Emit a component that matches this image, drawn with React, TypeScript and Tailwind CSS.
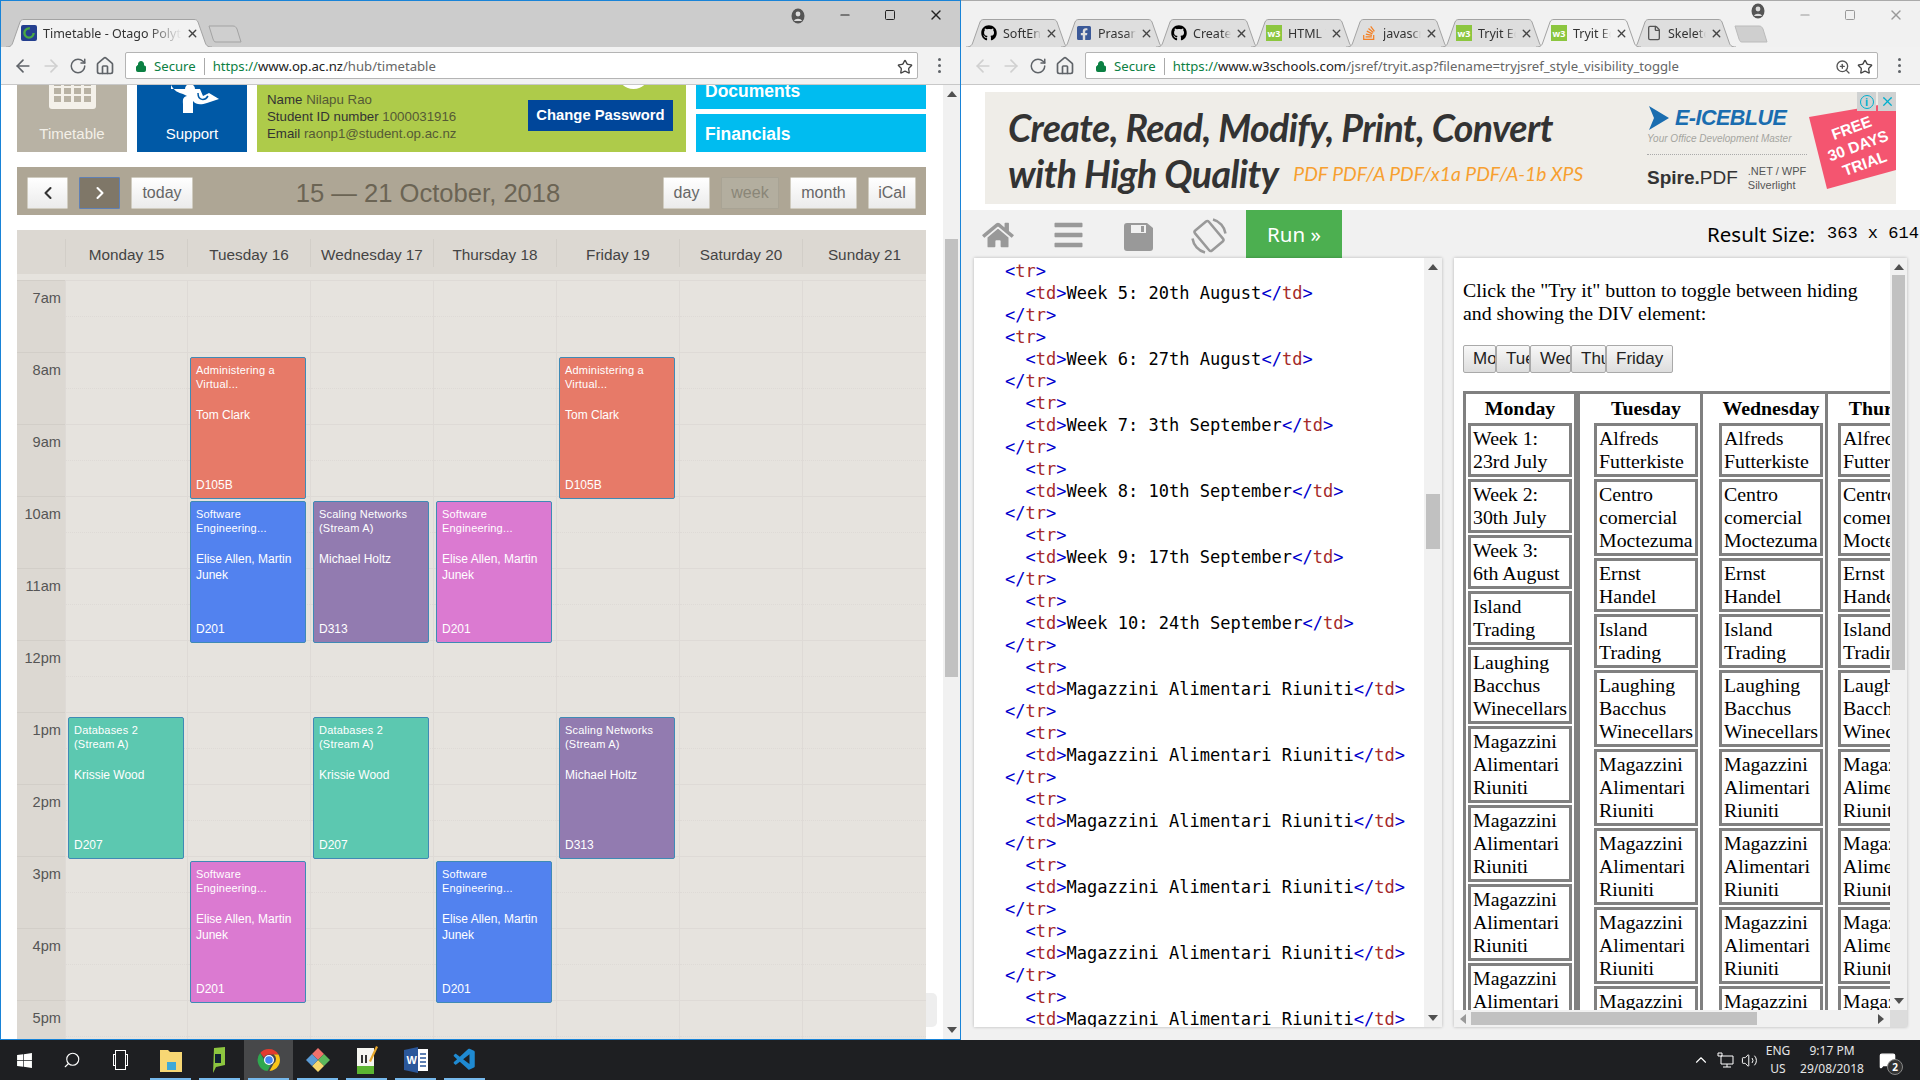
import React from 'react'
import { ArrowLeft, ArrowRight, RotateCw, Home, Star, Lock, X, Minus, Square, ZoomIn, File, ChevronLeft, ChevronRight, ChevronUp, Search, Volume2, MessageSquare } from 'lucide-react'
import { FaGithub, FaFacebookSquare, FaStackOverflow, FaWindows, FaHome, FaBars } from 'react-icons/fa'
import { VscVscode } from 'react-icons/vsc'

const sans = "font-['Liberation_Sans',Arial,sans-serif]"
const ui = "font-['Noto_Sans',sans-serif]"

function TabShape({ w, fill, stroke }: { w: number; fill: string; stroke: string }) {
  const d = `M0 28 C5 28 6 26 7 23 L14 3 C15 1 16 0.5 18 0.5 L${w - 18} 0.5 C${w - 16} 0.5 ${w - 15} 1 ${w - 14} 3 L${w - 7} 23 C${w - 6} 26 ${w - 5} 28 ${w} 28`
  return (
    <svg className="absolute inset-0" width={w} height={28} viewBox={`0 0 ${w} 28`}>
      <path d={d} fill={fill} stroke={stroke} />
    </svg>
  )
}

function W3Icon() {
  return <div className="w-4 h-4 bg-[#8cc63f] text-white text-[9px] font-bold flex items-center justify-center leading-none">w3</div>
}

function OtagoIcon() {
  return (
    <svg width="16" height="16" viewBox="0 0 16 16">
      <rect width="16" height="16" rx="2" fill="#243f8f" />
      <circle cx="8" cy="8" r="4.6" fill="none" stroke="#49a942" strokeWidth="2.4" strokeDasharray="22 8" />
    </svg>
  )
}

function Tab({ w, active, icon, title, bar }: { w: number; active?: boolean; icon: React.ReactNode; title: string; bar: string }) {
  return (
    <div className={`relative h-[28px] shrink-0 ${active ? 'z-10' : ''}`} style={{ width: w }}>
      <TabShape w={w} fill={active ? '#f2f2f2' : bar} stroke="#a3a3a3" />
      <div className="relative h-full flex items-center pl-[15px] pr-[13px]">
        <div className="w-4 h-4 shrink-0 flex items-center justify-center">{icon}</div>
        <div className={`${ui} ml-[6px] pt-[3px] flex-1 overflow-hidden whitespace-nowrap text-[12.5px] text-[#333] [mask-image:linear-gradient(to_right,black_75%,transparent)]`}>{title}</div>
        <X className="w-[13px] h-[13px] shrink-0 ml-[4px] text-[#444]" strokeWidth={2.5} />
      </div>
    </div>
  )
}

function Omnibox({ host, path, zoom, faded }: { host: string; path: string; zoom?: boolean; faded?: boolean }) {
  return (
    <div className="h-[38px] bg-[#f2f2f2] border-b border-[#c8c8c8] flex items-center shrink-0 text-[#5f6368]">
      <div className="w-[124px] flex items-center pl-[12px] gap-[8px] shrink-0">
        <ArrowLeft className={`w-5 h-5 ${faded ? 'text-[#d0d0d0]' : ''}`} />
        <ArrowRight className="w-5 h-5 text-[#d0d0d0]" />
        <RotateCw className="w-[18px] h-[18px]" />
        <Home className="w-5 h-5" />
      </div>
      <div className={`${ui} w-[793px] h-[27px] bg-white border border-[#b4b4b4] rounded-[2px] flex items-center pl-[9px] pr-[4px] pt-[2px] text-[13.15px] whitespace-nowrap`}>
        <Lock className="w-[12px] h-[13px] text-[#0b8043] shrink-0" fill="#0b8043" />
        <span className="text-[#0b8043] ml-[7px]">Secure</span>
        <span className="w-px h-[17px] bg-[#aaa] mx-[8px]" />
        <span className="text-[#0b8043]">https://</span>
        <span className="text-[#222]">{host}</span>
        <span className="text-[#666]">{path}</span>
        <span className="flex-1" />
        {zoom && <ZoomIn className="w-[16px] h-[16px] mr-[6px] text-[#555]" />}
        <Star className="w-[16px] h-[16px] text-[#444]" />
      </div>
      <div className="flex-1 flex flex-col items-center gap-[3px]">
        <span className="w-[3px] h-[3px] bg-[#5f6368] rounded-full" />
        <span className="w-[3px] h-[3px] bg-[#5f6368] rounded-full" />
        <span className="w-[3px] h-[3px] bg-[#5f6368] rounded-full" />
      </div>
    </div>
  )
}

function WindowControls({ light, userTop }: { light?: boolean; userTop: string }) {
  const c = light ? 'text-[#999]' : 'text-[#222]'
  return (
    <div className={`absolute right-0 top-0 flex items-center h-[28px] ${c}`}>
      <svg className={`mr-[33px] ${userTop} text-[#555]`} width="14" height="16" viewBox="0 0 14 16">
        <ellipse cx="7" cy="8" rx="6.5" ry="7.5" fill="currentColor" />
        <circle cx="7" cy="6" r="2.4" fill="#ddd" />
        <path d="M3 13c1-3 7-3 8 0z" fill="#ddd" />
      </svg>
      <Minus className="w-[14px] h-[14px] mr-[32px]" />
      <Square className="w-[12px] h-[14px] mr-[32px]" />
      <X className="w-[16px] h-[16px] mr-[16px]" />
    </div>
  )
}

function CalendarGlyph() {
  return (
    <svg className="absolute left-[32px] bottom-[43px]" width="47" height="30" viewBox="0 0 47 30">
      <path d="M0 0h47v27a3 3 0 0 1-3 3H3a3 3 0 0 1-3-3z" fill="#f4f1ea" />
      <g fill="#b8b2a4">
        {[5, 15, 25, 35].map((x) =>
          [1, 9, 17].map((y) => <rect key={`${x}-${y}`} x={x} y={y} width="7" height="6" />)
        )}
      </g>
    </svg>
  )
}

function SupportGlyph() {
  return (
    <svg className="absolute left-[33px] top-0" width="50" height="28" viewBox="0 0 50 28">
      <path d="M1 0c3 6 8 8 12 9l4 2c-5 1-4 5-4 8v9h10v-12c3 4 8 4 14 2l12-4-10-6-6 3-3-7H1z" fill="#fff" />
      <circle cx="20" cy="4" r="5" fill="#fff" />
      <path d="M28 8c0 8 7 8 10 3" fill="none" stroke="#0059a6" strokeWidth="1.5" />
    </svg>
  )
}

function CalButton({ w, children, tone }: { w: number; children: React.ReactNode; tone?: 'active' | 'off' }) {
  const cls =
    tone === 'active'
      ? 'bg-[#7f7768] border-[#5f80b5] text-white'
      : tone === 'off'
        ? 'bg-[#b3ae9f] border-[#a8a394] text-[#8a8678]'
        : 'bg-gradient-to-b from-white to-[#ebebeb] border-[#d0ccc0] text-[#666]'
  return (
    <div className={`h-[32px] shrink-0 border rounded-[1px] flex items-center justify-center text-[16px] ${cls}`} style={{ width: w }}>
      {children}
    </div>
  )
}

type Ev = { day: number; hour: number; color: string; title: string[]; who: string[]; room: string }

const SE = ['Software', 'Engineering...']
const AV = ['Administering a', 'Virtual...']
const SN = ['Scaling Networks', '(Stream A)']
const DB = ['Databases 2', '(Stream A)']
const EA = ['Elise Allen, Martin', 'Junek']

const events: Ev[] = [
  { day: 1, hour: 8, color: 'bg-[#e77a68]', title: AV, who: ['Tom Clark'], room: 'D105B' },
  { day: 4, hour: 8, color: 'bg-[#e77a68]', title: AV, who: ['Tom Clark'], room: 'D105B' },
  { day: 1, hour: 10, color: 'bg-[#5282ef]', title: SE, who: EA, room: 'D201' },
  { day: 2, hour: 10, color: 'bg-[#927bb0]', title: SN, who: ['Michael Holtz'], room: 'D313' },
  { day: 3, hour: 10, color: 'bg-[#db7ad1]', title: SE, who: EA, room: 'D201' },
  { day: 0, hour: 13, color: 'bg-[#5cc8b0]', title: DB, who: ['Krissie Wood'], room: 'D207' },
  { day: 2, hour: 13, color: 'bg-[#5cc8b0]', title: DB, who: ['Krissie Wood'], room: 'D207' },
  { day: 4, hour: 13, color: 'bg-[#927bb0]', title: SN, who: ['Michael Holtz'], room: 'D313' },
  { day: 1, hour: 15, color: 'bg-[#db7ad1]', title: SE, who: EA, room: 'D201' },
  { day: 3, hour: 15, color: 'bg-[#5282ef]', title: SE, who: EA, room: 'D201' },
]

const days = ['Monday 15', 'Tuesday 16', 'Wednesday 17', 'Thursday 18', 'Friday 19', 'Saturday 20', 'Sunday 21']
const hours = ['7am', '8am', '9am', '10am', '11am', '12pm', '1pm', '2pm', '3pm', '4pm', '5pm']

function EventCard({ ev }: { ev: Ev }) {
  return (
    <div
      className={`absolute left-[2px] w-[116px] h-[142px] ${ev.color} border border-[#3f8ab5] rounded-[2px] flex flex-col pl-[5px] pt-[5px] pb-[5px] text-white`}
      style={{ top: (ev.hour - 7) * 72 + 5 }}
    >
      <div className="text-[11px] leading-[14px] tracking-[0.2px]">
        {ev.title.map((t) => (
          <div key={t}>{t}</div>
        ))}
      </div>
      <div className="mt-[16px] text-[12px] leading-[16px]">
        {ev.who.map((t) => (
          <div key={t}>{t}</div>
        ))}
      </div>
      <div className="mt-auto text-[12px] leading-[16px]">{ev.room}</div>
    </div>
  )
}

function HourLines() {
  return (
    <>
      {hours.map((h) => (
        <div key={h} className="h-[72px] border-t border-[#dedad6]">
          <div className="h-[36px] border-b border-dotted border-[#dedad6]" />
        </div>
      ))}
    </>
  )
}

function Timetable() {
  return (
    <div className={`${sans} flex-1 relative overflow-hidden pl-4 bg-white`}>
      <div className="w-[909px]">
        {/* Tiles */}
        <div className="flex gap-[10px] h-[67px]">
          <div className="relative w-[110px] bg-[#b8b2a4] flex items-end justify-center pb-[7px] text-[15px] text-[#f3f0e8]">
            <CalendarGlyph />
            Timetable
          </div>
          <div className="relative w-[110px] bg-[#0059a6] flex items-end justify-center pb-[7px] text-[15px] text-white">
            <SupportGlyph />
            Support
          </div>
          <div className="relative w-[429px] bg-[#aecb4a] overflow-hidden flex items-end justify-between pl-[10px] pr-[13px] pb-[10px] text-[13.3px] leading-[17px] text-[#555a35]">
            <div className="absolute left-[360px] -top-[29px] w-[33px] h-[33px] rounded-full bg-white" />
            <div>
              <div><span className="text-[#333]">Name</span> Nilapu Rao</div>
              <div><span className="text-[#333]">Student ID number</span> 1000031916</div>
              <div><span className="text-[#333]">Email</span> raonp1@student.op.ac.nz</div>
            </div>
            <div className="w-[145px] h-[31px] mb-[11px] bg-[#00469a] text-white text-[14.8px] font-bold flex items-center justify-center">Change Password</div>
          </div>
          <div className="w-[230px] flex flex-col gap-[5px] font-bold text-white text-[17.5px]">
            <div className="h-[24px] bg-[#00bcf0] pl-[9px] leading-[12px]">Documents</div>
            <div className="h-[38px] bg-[#00bcf0] pl-[9px] pt-[2px] flex items-center">Financials</div>
          </div>
        </div>

        {/* Calendar toolbar */}
        <div className="mt-[15px] h-[48px] bg-[#aea695] flex items-start pt-[10px] gap-[11px] px-[10px]">
          <CalButton w={41}><ChevronLeft className="w-5 h-5 text-[#333]" strokeWidth={2.5} /></CalButton>
          <CalButton w={41} tone="active"><ChevronRight className="w-5 h-5" strokeWidth={2.5} /></CalButton>
          <CalButton w={62}>today</CalButton>
          <div className="flex-1 text-center text-[25.6px] leading-[32px] text-[#6b6454] whitespace-nowrap">15 — 21 October, 2018</div>
          <CalButton w={47}>day</CalButton>
          <CalButton w={58} tone="off">week</CalButton>
          <CalButton w={67}>month</CalButton>
          <CalButton w={48}>iCal</CalButton>
        </div>

        {/* Day header */}
        <div className="mt-[15px] h-[44px] bg-[#dcd8d2] grid grid-cols-[48px_122px_repeat(5,123px)_1fr] text-[15.3px] text-[#444]">
          <div />
          {days.map((d) => (
            <div key={d} className="flex items-center justify-center border-l border-[#d2cec8] my-[9px] pt-[5px] whitespace-nowrap">{d}</div>
          ))}
        </div>

        {/* Week grid */}
        <div className="bg-[#e6e3de] pt-[6px] grid grid-cols-[48px_122px_repeat(5,123px)_1fr]">
          <div className="bg-[#dcd8d2]">
            {hours.map((h) => (
              <div key={h} className="h-[72px] border-t border-[#d2cec8] pr-[4px] pt-[8px] text-right text-[14.6px] leading-[18px] text-[#555]">{h}</div>
            ))}
          </div>
          {days.map((d, i) => (
            <div key={d} className="relative border-l border-[#dedad6]">
              <HourLines />
              {events.filter((e) => e.day === i).map((e) => (
                <EventCard key={`${e.day}-${e.hour}`} ev={e} />
              ))}
            </div>
          ))}
        </div>
      </div>
      <div className="absolute left-[925px] top-[908px] w-[11px] h-[34px] bg-[#eeeeee] rounded-r-[5px]" />
    </div>
  )
}

function Arrow({ dir, className }: { dir: 'up' | 'down' | 'left' | 'right'; className?: string }) {
  const pts = { up: '0,6 10,6 5,0', down: '0,0 10,0 5,6', left: '6,0 6,10 0,5', right: '0,0 0,10 6,5' }[dir]
  const size = dir === 'up' || dir === 'down' ? { width: 10, height: 6 } : { width: 6, height: 10 }
  return (
    <svg className={className} {...size} viewBox={`0 0 ${size.width} ${size.height}`}>
      <polygon points={pts} fill="currentColor" />
    </svg>
  )
}

function VScroll({ thumbTop, thumbH, color = 'text-[#505050]', w = 17 }: { thumbTop: number; thumbH: number; color?: string; w?: number }) {
  return (
    <div className="relative bg-[#f1f1f1] shrink-0 h-full flex flex-col items-center" style={{ width: w }}>
      <Arrow dir="up" className={`mt-[6px] ${color}`} />
      <div className="absolute left-[2px] right-[2px] bg-[#c1c1c1]" style={{ top: thumbTop, height: thumbH }} />
      <Arrow dir="down" className={`absolute bottom-[6px] ${color}`} />
    </div>
  )
}

function LeftWindow() {
  return (
    <div className="w-[961px] h-[1040px] border border-[#1883d7] flex flex-col shrink-0 bg-white">
      <div className="relative h-[46px] bg-[#cccccc] shrink-0 flex items-end pl-[5px]">
        <Tab w={206} active bar="#ccc" icon={<OtagoIcon />} title="Timetable - Otago Polytechnic" />
        <svg className="-ml-[4px] mb-[4px]" width="34" height="18" viewBox="0 0 34 18">
          <path d="M1 1h24c2 0 3 1 4 3l4 13H8c-2 0-2-1-3-3z" fill="#cfcfcf" stroke="#a3a3a3" />
        </svg>
        <WindowControls userTop="mt-[1px]" />
      </div>
      <Omnibox host="www.op.ac.nz" path="/hub/timetable" />
      <div className="flex-1 flex min-h-0">
        <Timetable />
        <VScroll thumbTop={154} thumbH={438} />
      </div>
    </div>
  )
}

function Tag({ t }: { t: string }) {
  const close = t.startsWith('/')
  return (
    <>
      <span className="text-[#0000cd]">{close ? '</' : '<'}</span>
      <span className="text-[#a52a2a]">{close ? t.slice(1) : t}</span>
      <span className="text-[#0000cd]">&gt;</span>
    </>
  )
}

const weekRows = [
  { indent: false, text: 'Week 5: 20th August' },
  { indent: false, text: 'Week 6: 27th August' },
  { indent: true, text: 'Week 7: 3th September' },
  { indent: true, text: 'Week 8: 10th September' },
  { indent: true, text: 'Week 9: 17th September' },
  { indent: true, text: 'Week 10: 24th September' },
  ...Array.from({ length: 6 }, () => ({ indent: true, text: 'Magazzini Alimentari Riuniti' })),
]

function Editor() {
  return (
    <div className="w-[468px] h-[769px] bg-white flex shadow-[0_0_3px_rgba(0,0,0,0.25)] shrink-0">
      <div className="flex-1 overflow-hidden pl-[31px] pt-[2px] font-['DejaVu_Sans_Mono',monospace] text-[17.05px] leading-[22px] text-black whitespace-pre">
        {weekRows.map((r, i) => (
          <div key={i}>
            <div className={r.indent ? 'pl-[20.5px]' : ''}><Tag t="tr" /></div>
            <div className="pl-[20.5px]"><Tag t="td" />{r.text}<Tag t="/td" /></div>
            <div><Tag t="/tr" /></div>
          </div>
        ))}
      </div>
      <VScroll thumbTop={236} thumbH={55} w={18} />
    </div>
  )
}

const mon = [
  ['Week 1:', '23rd July'],
  ['Week 2:', '30th July'],
  ['Week 3:', '6th August'],
  ['Island', 'Trading'],
  ['Laughing', 'Bacchus', 'Winecellars'],
  ...Array.from({ length: 5 }, () => ['Magazzini', 'Alimentari', 'Riuniti']),
]
const rest = [
  ['Alfreds', 'Futterkiste'],
  ['Centro', 'comercial', 'Moctezuma'],
  ['Ernst', 'Handel'],
  ['Island', 'Trading'],
  ['Laughing', 'Bacchus', 'Winecellars'],
  ...Array.from({ length: 5 }, () => ['Magazzini', 'Alimentari', 'Riuniti']),
]

function DayColumn({ name, rows, className }: { name: string; rows: string[][]; className: string }) {
  return (
    <div className={`shrink-0 border-[#808080] ${className}`}>
      <div className="w-[104px] h-[29px] flex items-center justify-center font-bold whitespace-nowrap">{name}</div>
      <div className="flex flex-col gap-[2px] w-[104px]">
        {rows.map((r, i) => (
          <div key={i} className="border-[3px] border-[#808080] p-px pl-[2px] whitespace-nowrap">
            {r.map((l) => (
              <div key={l}>{l}</div>
            ))}
          </div>
        ))}
      </div>
    </div>
  )
}

function ToggleButton({ w, children }: { w: number; children: React.ReactNode }) {
  return (
    <div className="h-[28px] bg-gradient-to-b from-[#f8f8f8] to-[#dddddd] border border-[#a9a9a9] rounded-[2px] overflow-hidden whitespace-nowrap pl-[9px] font-['Liberation_Sans',sans-serif] text-[17px] leading-[26px] text-[#222]" style={{ width: w }}>
      {children}
    </div>
  )
}

function ResultPanel() {
  return (
    <div className="w-[453px] h-[769px] bg-white flex flex-col shadow-[0_0_3px_rgba(0,0,0,0.25)] shrink-0">
      <div className="flex flex-1 min-h-0">
        <div className="flex-1 overflow-hidden pl-[9px] pt-[21px] font-['Liberation_Serif',serif] text-[19.85px] leading-[23px] text-black">
          <p className="w-[420px]">Click the "Try it" button to toggle between hiding and showing the DIV element:</p>
          <div className="flex mt-[20px]">
            <ToggleButton w={33}>Monday</ToggleButton>
            <ToggleButton w={34}>Tuesday</ToggleButton>
            <ToggleButton w={41}>Wednesday</ToggleButton>
            <ToggleButton w={35}>Thursday</ToggleButton>
            <ToggleButton w={67}>Friday</ToggleButton>
          </div>
          <div className="flex mt-[18px] w-[600px] border-t-[3px] border-[#808080]">
            <DayColumn name="Monday" rows={mon} className="w-[114px] border-l-[3px] border-r-[3px] pl-[2px]" />
            <DayColumn name="Tuesday" rows={rest} className="w-[126px] border-l-[3px] border-r-[3px] pl-[14px]" />
            <DayColumn name="Wednesday" rows={rest} className="w-[125px] border-r-[3px] pl-[16px]" />
            <DayColumn name="Thursday" rows={rest} className="w-[140px] pl-[10px]" />
          </div>
        </div>
        <VScroll thumbTop={17} thumbH={395} />
      </div>
      <div className="relative h-[17px] bg-[#f1f1f1] shrink-0 flex items-center justify-between pl-[6px] pr-[23px] text-[#999]">
        <Arrow dir="left" />
        <div className="absolute left-[17px] w-[286px] top-[2px] bottom-[2px] bg-[#c1c1c1]" />
        <Arrow dir="right" className="text-[#505050]" />
        <div className="absolute right-0 top-0 w-[17px] h-full bg-[#dcdcdc]" />
      </div>
    </div>
  )
}

function RotateGlyph() {
  return (
    <svg width="36" height="36" viewBox="0 0 36 36" fill="none" stroke="#999">
      <rect x="9" y="5" width="18" height="26" rx="2" strokeWidth="2.5" transform="rotate(-40 18 18)" />
      <path d="M22 1.5a17 17 0 0 1 12.5 14" strokeWidth="2.5" />
      <path d="M14 34.5A17 17 0 0 1 1.5 20.5" strokeWidth="2.5" />
    </svg>
  )
}

function SaveGlyph() {
  return (
    <svg className="ml-[40px] mt-[13px]" width="29" height="28" viewBox="0 0 29 28">
      <path d="M3 0h20l6 5v20a3 3 0 0 1-3 3H3a3 3 0 0 1-3-3V3a3 3 0 0 1 3-3z" fill="#999" />
      <rect x="7" y="2" width="15" height="8" fill="#f1f1f1" />
      <rect x="17" y="3" width="3" height="6" fill="#999" />
    </svg>
  )
}

function AdBanner() {
  return (
    <div className="relative mx-[24px] h-[112px] bg-[#efede8] flex overflow-hidden shrink-0">
      <div className="pl-[23px] pt-[13px] w-[662px] font-['Lato',sans-serif] italic font-bold text-[#333] text-[37.5px] leading-[46px] whitespace-nowrap tracking-[-0.6px]">
        <div>Create, Read, Modify, Print, Convert</div>
        <div className="flex items-center">
          with High Quality
          <span className="ml-[15px] text-[19.3px] font-normal tracking-normal text-[#f7a030]">PDF PDF/A PDF/x1a PDF/A-1b XPS</span>
        </div>
      </div>
      <div className={`${sans} pt-[12px] w-[160px]`}>
        <div className="flex items-center gap-[5px]">
          <svg width="23" height="26" viewBox="0 0 23 26"><path d="M2 1l20 12L2 25l5-12z" fill="#1a6db0" /></svg>
          <span className="italic font-bold text-[21.5px] leading-[28px] text-[#1a6db0] tracking-[-0.5px]">E-ICEBLUE</span>
        </div>
        <div className="italic text-[#a5a5a0] text-[10px] leading-[14px] whitespace-nowrap">Your Office Development Master</div>
        <div className="border-t border-dotted border-[#aaa] mt-[8px]" />
        <div className="flex items-center mt-[8px] text-[#333]">
          <span className="text-[19px] whitespace-nowrap leading-[30px]"><b>Spire.</b>PDF</span>
          <span className="ml-[10px] text-[11px] leading-[14px] text-[#555] whitespace-nowrap">.NET / WPF<br />Silverlight</span>
        </div>
      </div>
      <svg className="absolute right-0 top-[10px]" width="87" height="90" viewBox="0 0 87 90">
        <polygon points="0,15 87,0 87,68 18,87" fill="#f45570" />
      </svg>
      <div className={`${sans} absolute right-[3px] top-[25px] w-[70px] -rotate-[20deg] text-center text-white font-bold text-[15.5px] leading-[19px] whitespace-nowrap`}>FREE<br />30 DAYS<br />TRIAL</div>
      <div className="absolute right-0 top-0 h-[19px] flex gap-[2px]">
        <div className="w-[19px] bg-[#d0d2d2] flex items-center justify-center">
          <span className="w-[14px] h-[14px] rounded-full border border-[#00aecd] text-[#00aecd] text-[10px] leading-[12px] text-center font-bold">i</span>
        </div>
        <div className="w-[18px] bg-[#d0d2d2] flex items-center justify-center">
          <X className="w-[15px] h-[15px] text-[#00aecd]" strokeWidth={2} />
        </div>
      </div>
    </div>
  )
}

const rightTabs = [
  { title: 'SoftEng', icon: <FaGithub className="w-4 h-4 text-black" /> },
  { title: 'Prasanth', icon: <FaFacebookSquare className="w-4 h-4 text-[#3b5998]" /> },
  { title: 'Create', icon: <FaGithub className="w-4 h-4 text-black" /> },
  { title: 'HTML Tables', icon: <W3Icon /> },
  { title: 'javascript', icon: <FaStackOverflow className="w-4 h-4 text-[#f48024]" /> },
  { title: 'Tryit Editor', icon: <W3Icon /> },
  { title: 'Tryit Editor', icon: <W3Icon />, active: true },
  { title: 'Skeleton', icon: <File className="w-4 h-4 text-[#555]" /> },
]

function RightWindow() {
  return (
    <div className="flex-1 h-[1040px] border-t border-[#aaa] flex flex-col bg-[#f1f1f1]">
      <div className="relative h-[46px] shrink-0 flex items-end pl-[5px]">
        {rightTabs.map((t, i) => (
          <div key={i} className={i === 0 ? '' : '-ml-[10px]'}>
            <Tab w={105} active={t.active} bar="#dedede" icon={t.icon} title={t.title} />
          </div>
        ))}
        <svg className="-ml-[4px] mb-[4px]" width="38" height="18" viewBox="0 0 34 18">
          <path d="M1 1h24c2 0 3 1 4 3l4 13H8c-2 0-2-1-3-3z" fill="#cfcfcf" stroke="#bbb" />
        </svg>
        <WindowControls light userTop="-mt-[8px]" />
      </div>
      <Omnibox host="www.w3schools.com" path="/jsref/tryit.asp?filename=tryjsref_style_visibility_toggle" zoom faded />
      <div className="bg-white pt-[7px] pb-[6px] shrink-0">
        <AdBanner />
      </div>
      <div className="h-[48px] flex items-start shrink-0 pl-[21px] text-[#999]">
        <FaHome className="w-[32px] h-[28px] mt-[11px]" />
        <FaBars className="w-[31px] h-[32px] ml-[39px] mt-[9px]" />
        <SaveGlyph />
        <div className="ml-[38px] mt-[8px]"><RotateGlyph /></div>
        <div className={`${ui} ml-[19px] w-[96px] h-[48px] bg-[#4caf50] text-white text-[20.5px] flex items-center justify-center`}>Run »</div>
        <div className={`${ui} ml-[365px] h-[48px] flex items-center text-[20.5px] text-black whitespace-nowrap`}>Result Size:</div>
        <div className="ml-[12px] h-[48px] flex items-center font-['Liberation_Mono',monospace] text-[17px] whitespace-pre text-black">363 x 614</div>
      </div>
      <div className="flex pl-[13px] gap-[12px]">
        <Editor />
        <ResultPanel />
      </div>
    </div>
  )
}

function ChromeGlyph() {
  return (
    <svg width="24" height="24" viewBox="0 0 24 24">
      <path d="M12 1a11 11 0 0 1 9.5 5.5H12a5.5 5.5 0 0 0-5 3L3.2 5A11 11 0 0 1 12 1z" fill="#e33b2e" />
      <path d="M21.5 6.5A11 11 0 0 1 12.5 23l4.2-7.5a5.5 5.5 0 0 0 0-9z" fill="#f9c518" />
      <path d="M3.2 5l4 7a5.5 5.5 0 0 0 6.8 4.6L10.5 23A11 11 0 0 1 3.2 5z" fill="#2fa84f" />
      <circle cx="12" cy="12" r="4.4" fill="#4285f4" stroke="#fff" strokeWidth="1.2" />
    </svg>
  )
}

function TaskIcon({ children, active, running = true }: { children: React.ReactNode; active?: boolean; running?: boolean }) {
  return (
    <div className={`relative w-[49px] h-10 flex items-center justify-center ${active ? 'bg-[#47484a]' : ''}`}>
      {children}
      {running && <div className="absolute bottom-0 left-[4px] right-[4px] h-[2px] bg-[#76b9ed]" />}
    </div>
  )
}

function Taskbar() {
  return (
    <div className={`${ui} h-10 bg-[#1e1f22] flex items-center shrink-0 text-[#e6e6e6]`}>
      <div className="w-[48px] flex justify-center"><FaWindows className="w-[17px] h-[17px] text-white" /></div>
      <div className="w-[48px] flex justify-center"><Search className="w-[18px] h-[18px] text-white -scale-x-100" strokeWidth={1.5} /></div>
      <div className="w-[48px] flex justify-center">
        <div className="flex items-center">
          <span className="w-[2px] h-[12px] border border-white border-r-0" />
          <span className="w-[11px] h-[20px] border border-white" />
          <span className="w-[2px] h-[12px] border border-white border-l-0" />
        </div>
      </div>
      <div className="flex ml-[2px]">
        <TaskIcon>
          <svg width="22" height="24" viewBox="0 0 22 24">
            <path d="M0 2h8l2 2h12v20H0z" fill="#f7d774" />
            <rect x="7" y="14" width="9" height="8" fill="#3fa9d8" />
          </svg>
        </TaskIcon>
        <TaskIcon>
          <svg className="-ml-[4px]" width="14" height="26" viewBox="0 0 14 26">
            <path d="M3 1l11-1v18l-9 2-3 6z" fill="#8dc63f" />
            <rect x="4" y="7" width="6" height="9" fill="#123" />
          </svg>
        </TaskIcon>
        <TaskIcon active><ChromeGlyph /></TaskIcon>
        <TaskIcon>
          <svg width="26" height="26" viewBox="0 0 26 26">
            <path d="M13 13L7 7l6-6 6 6z" fill="#f0716c" />
            <path d="M13 13l6-6 6 6-6 6z" fill="#5cb85c" />
            <path d="M13 13l6 6-6 6-6-6z" fill="#f5d76e" />
            <path d="M13 13l-6 6-6-6 6-6z" fill="#5b9bd5" />
          </svg>
        </TaskIcon>
        <TaskIcon>
          <svg width="22" height="28" viewBox="0 0 22 28">
            <rect x="1" y="2" width="17" height="26" fill="#f5f5f0" />
            <rect x="1" y="20" width="17" height="8" fill="#5cb531" />
            <rect x="5" y="9" width="2" height="8" fill="#333" />
            <rect x="9" y="9" width="2" height="8" fill="#333" />
            <path d="M20 0l2 1-7 15-2-1z" fill="#e7a72c" />
          </svg>
        </TaskIcon>
        <TaskIcon>
          <svg width="24" height="26" viewBox="0 0 24 26">
            <rect x="8" y="2" width="16" height="22" fill="#fff" />
            <path d="M0 3l14-3v26L0 23z" fill="#2b579a" />
            <text x="2.5" y="17" fontSize="11" fontWeight="bold" fill="#fff" fontFamily="Liberation Sans">W</text>
            <path d="M16 7h6M16 11h6M16 15h6M16 19h6" stroke="#2b579a" strokeWidth="1.5" />
          </svg>
        </TaskIcon>
        <TaskIcon><VscVscode className="w-[26px] h-[26px] text-[#1f8ad2]" /></TaskIcon>
      </div>
      <div className="flex-1" />
      <ChevronUp className="w-[18px] h-[18px] mr-[6.5px] text-white" strokeWidth={1.5} />
      <svg className="mr-[7px]" width="17" height="16" viewBox="0 0 17 16" fill="none" stroke="#fff">
        <path d="M4 4h12v8H4zM10 12v3M6 15h8M1 1h4v3H1z" />
      </svg>
      <Volume2 className="w-[17px] h-[17px] mr-[7.5px] text-white" strokeWidth={1.4} />
      <div className="w-[26px] text-center text-[12px] leading-[18px]">ENG<br />US</div>
      <div className="w-[70px] ml-[6px] text-center text-[12px] leading-[18px] whitespace-nowrap">9:17 PM<br />29/08/2018</div>
      <div className="relative w-[40px] mr-[13px] h-full flex items-center justify-center">
        <MessageSquare className="w-[17px] h-[17px] text-white" fill="#fff" />
        <span className="absolute left-[20px] top-[19px] w-[16px] h-[16px] rounded-full bg-[#333] border border-[#888] text-[10px] leading-[14px] text-center text-white font-bold">2</span>
      </div>
    </div>
  )
}

export default function App() {
  return (
    <div className="w-[1920px] h-[1080px] overflow-hidden flex flex-col bg-[#1e1f22]">
      <div className="flex h-[1040px] shrink-0">
        <LeftWindow />
        <RightWindow />
      </div>
      <Taskbar />
    </div>
  )
}
